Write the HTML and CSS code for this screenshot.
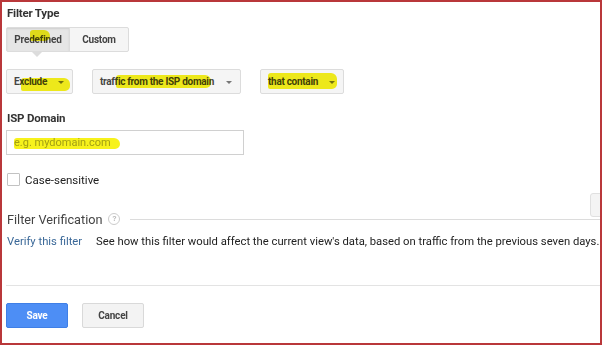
FILE: index.html
```html
<!DOCTYPE html>
<html>
<head>
<meta charset="utf-8">
<link rel="stylesheet" href="styles.css">
</head>
<body>
<div class="frame">
  <div class="title">Filter Type</div>
  <div class="toggle">
    <div class="seg seg-on">Predefined<span class="mark mark-pre"></span></div>
    <div class="seg">Custom</div>
  </div>
  <div class="selects">
    <div class="sel sel-ex">Exclude<span class="caret"></span><span class="mark mark-ex"></span></div>
    <div class="sel sel-tr">traffic from the ISP domain<span class="caret"></span><span class="mark mark-tr"></span></div>
    <div class="sel sel-tc">that contain<span class="caret"></span><span class="mark mark-tc"></span></div>
  </div>
  <div class="label">ISP Domain</div>
  <div class="input"><span class="ph">e.g. mydomain.com</span><span class="mark mark-ph"></span></div>
  <label class="check"><span class="box"></span><span>Case-sensitive</span></label>
  <div class="verif">
    <span class="verif-title">Filter Verification</span>
    <span class="help">?</span>
    <span class="rule"></span>
  </div>
  <div class="vrow">
    <a class="link">Verify this filter</a>
    <span class="desc">See how this filter would affect the current view's data, based on traffic from the previous seven days.</span>
  </div>
  <div class="sep"></div>
  <div class="actions">
    <button class="btn btn-save">Save</button>
    <button class="btn btn-cancel">Cancel</button>
  </div>
  <div class="edge-btn"></div>
</div>
</body>
</html>
```
FILE: styles.css
```css
html, body {
  margin: 0;
  padding: 0;
  background: #fff;
}
.frame {
  position: relative;
  width: 602px;
  height: 345px;
  box-sizing: border-box;
  border: 2px solid #b9373a;
  padding: 1px 0 0 4px;
  overflow: hidden;
  font-family: Roboto, "Liberation Sans", Arial, sans-serif;
  color: #222;
}
.title, .label {
  font-weight: bold;
  font-size: 11.5px;
  letter-spacing: -0.2px;
  line-height: 16px;
  color: #333;
  margin-left: 1px;
}
.title { margin-top: 2px; }
.toggle {
  display: flex;
  margin-top: 6px;
  width: 123px;
  height: 25px;
  box-sizing: border-box;
  border: 1px solid #dcdcdc;
  border-radius: 2px;
  background: #f5f5f5;
}
.seg {
  position: relative;
  display: flex;
  align-items: center;
  justify-content: center;
  font-size: 10px;
  letter-spacing: -0.2px;
  font-weight: bold;
  color: #444;
}
.seg-on {
  width: 62px;
  background: #e6e6e6;
  box-shadow: inset 0 1px 2px rgba(0,0,0,0.1);
  border-right: 1px solid #dcdcdc;
}
.seg-on::after {
  content: "";
  position: absolute;
  left: 25px;
  bottom: -6px;
  border-left: 5px solid transparent;
  border-right: 5px solid transparent;
  border-top: 5px solid #dcdcdc;
}
.seg:last-child { flex: 1; }
.selects {
  display: flex;
  gap: 19px;
  margin-top: 17px;
}
.sel {
  position: relative;
  display: flex;
  align-items: center;
  height: 25px;
  box-sizing: border-box;
  border: 1px solid #dcdcdc;
  border-radius: 2px;
  background: #f5f5f5;
  font-size: 10px;
  letter-spacing: -0.3px;
  font-weight: bold;
  color: #444;
  padding-left: 7px;
}
.sel-ex { width: 67px; }
.sel-tr { width: 149px; }
.sel-tc { width: 84px; }
.caret {
  position: absolute;
  right: 8px;
  top: 11px;
  border-left: 3px solid transparent;
  border-right: 3px solid transparent;
  border-top: 3px solid #777;
}
.mark {
  position: absolute;
  background: #f7f21c;
  mix-blend-mode: multiply;
  border-radius: 3px 6px 5px 2px;
}
.mark-pre { left: 23px; top: 2px; width: 20px; height: 11px; }
.mark-ex { left: 14px; top: 8px; width: 49px; height: 13px; }
.mark-tr { left: 23px; top: 5px; width: 95px; height: 13px; }
.mark-tc { left: 7px; top: 3px; width: 69px; height: 16px; }
.mark-ph { left: 7px; top: 7px; width: 106px; height: 11px; }
.label { margin-top: 16px; }
.input {
  position: relative;
  margin-top: 4px;
  width: 238px;
  height: 25px;
  box-sizing: border-box;
  border: 1px solid #d0d0d0;
  display: flex;
  align-items: center;
  padding-left: 7px;
  font-size: 11px;
  color: #a8a8a8;
}
.check {
  display: flex;
  align-items: center;
  margin-top: 18px;
  margin-left: 1px;
  font-size: 11.5px;
  color: #222;
  gap: 5px;
  height: 13px;
}
.box {
  width: 11px;
  height: 11px;
  border: 1px solid #c2c2c2;
  border-radius: 1px;
}
.verif {
  display: flex;
  align-items: center;
  margin-top: 24px;
  margin-left: 1px;
  height: 18px;
}
.verif-title {
  font-size: 12.7px;
  color: #444;
}
.help {
  width: 10px;
  height: 10px;
  border: 1px solid #ccc;
  border-radius: 50%;
  margin-left: 6px;
  font-size: 8px;
  line-height: 10px;
  text-align: center;
  color: #bbb;
  font-weight: bold;
}
.rule {
  flex: 1;
  height: 1px;
  background: #dcdcdc;
  margin-left: 10px;
}
.vrow {
  display: flex;
  gap: 14px;
  margin-top: 6px;
  margin-left: 1px;
  font-size: 11.25px;
  line-height: 16px;
  white-space: nowrap;
}
.link { color: #3a6898; }
.desc { color: #222; }
.sep {
  margin-top: 35px;
  height: 1px;
  background: #e3e3e3;
}
.actions {
  display: flex;
  gap: 14px;
  margin-top: 17px;
}
.btn {
  height: 25px;
  box-sizing: border-box;
  border-radius: 2px;
  font-family: Roboto, "Liberation Sans", Arial, sans-serif;
  font-size: 10px;
  letter-spacing: -0.2px;
  font-weight: bold;
  padding: 0;
}
.btn-save {
  width: 62px;
  background: #4d8ef5;
  border: 1px solid #3f7fe6;
  color: #fff;
}
.btn-cancel {
  width: 62px;
  background: #f3f3f3;
  border: 1px solid #d9d9d9;
  color: #444;
}
.edge-btn {
  position: absolute;
  left: 588px;
  top: 191px;
  width: 20px;
  height: 22px;
  border: 1px solid #e0e0e0;
  border-radius: 3px;
  background: #f4f4f4;
}
```
